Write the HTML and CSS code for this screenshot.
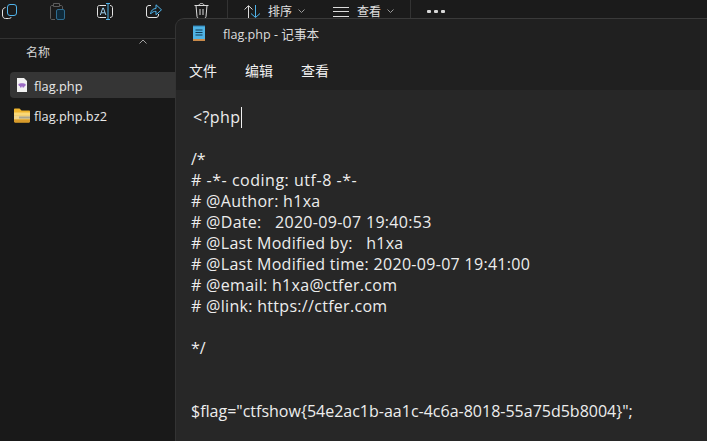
FILE: index.html
```html
<!DOCTYPE html>
<html lang="zh">
<head>
<meta charset="utf-8">
<title>flag.php - 记事本</title>
<link rel="stylesheet" href="styles.css">
</head>
<body>
<div class="explorer">
  <div class="toolbar">
    <svg class="tool t-copy" width="15" height="15" viewBox="0 0 15 15" fill="none"><rect x="5.500" y=".5" width="9" height="11" rx="2.500" stroke="#4fb3ea"/><path d="M3.500 3.500C1.500 4 .5 5 .5 7v4c0 2 1 3.500 3 3.500h3c1.500 0 2.500-.7 3-1.500" stroke="#e4e4e4"/></svg>
    <svg class="tool t-paste" width="15" height="17" viewBox="0 0 15 17" fill="none"><path d="M3 2.500H2C1 2.500.5 3 .5 4v11c0 1 .5 1.500 1.500 1.500h3" stroke="#5c5c5c"/><path d="M3.500.5h6v3h-6z M10 2.500h1c1 0 1.500.5 1.500 1.500v2" stroke="#5c5c5c"/><rect x="6.500" y="6.500" width="8" height="10" rx="1.500" fill="#0f2a3a" stroke="#2f6c90"/></svg>
    <svg class="tool t-rename" width="16" height="17" viewBox="0 0 16 17" fill="none"><path d="M9 2.500H2.500C1 2.500.5 3.500.5 4.500v8c0 1 .5 2 2 2H9M13 2.500c1.500 0 2.500 1 2.500 2v8c0 1-1 2-2.500 2" stroke="#e4e4e4"/><path d="M9 .5h4M9 16.500h4M11 .5v16" stroke="#4fb3ea"/><path d="M3.300 12 5.800 5h.6l2.500 7M4.200 9.800h3.800" stroke="#9fd0ee"/></svg>
    <svg class="tool t-share" width="16" height="14" viewBox="0 0 16 14" fill="none"><path d="M5 1.500H3C1.500 1.500.5 2.500.5 4v7c0 1.500 1 2.500 2.500 2.500h7c1.500 0 2.500-1 2.500-2.500v-1" stroke="#e4e4e4"/><path d="M4.500 10C5 6.500 7 4.500 10 4.500V.8L15.500 5.800 10 10.800V7.300C8 7.300 6 8 4.500 10z" stroke="#4fb3ea"/></svg>
    <svg class="tool t-trash" width="15" height="16" viewBox="0 0 15 16" fill="none"><path d="M.5 2.500h14M5 2.500c0-2.700 5-2.700 5 0M2 2.500l1 11c.1 1 1 2 2 2h5c1 0 1.900-1 2-2l1-11M6 6v6M9 6v6" stroke="#dcdcdc"/></svg>
    <span class="divider d-one"></span>
    <svg class="tool t-sort" width="16" height="13" viewBox="0 0 16 13" fill="none"><path d="M.5 4.500 4.500.7l4 3.800M4.500 1v12" stroke="#dcdcdc"/><path d="M7 8.500l4.500 4 4.500-4M11.500 0v12" stroke="#4fb3ea"/></svg>
    <span class="label l-sort">排序</span>
    <svg class="chev c-sort" width="7" height="4" viewBox="0 0 7 4" fill="none"><path d="M.5.500l3 3 3-3" stroke="#9a9a9a"/></svg>
    <svg class="tool t-view" width="16" height="10" viewBox="0 0 16 10" fill="none"><path d="M0 .5h16M0 4.500h16M0 9.500h16" stroke="#dcdcdc"/></svg>
    <span class="label l-view">查看</span>
    <svg class="chev c-view" width="7" height="4" viewBox="0 0 7 4" fill="none"><path d="M.5.500l3 3 3-3" stroke="#9a9a9a"/></svg>
    <span class="divider d-two"></span>
    <span class="dots"><i></i><i></i><i></i></span>
  </div>
  <div class="header">
    <span class="col-name">名称</span>
    <svg class="sort-up" width="8" height="5" viewBox="0 0 8 5" fill="none"><path d="M.5 4.500l3.500-3.500 3.500 3.500" stroke="#a0a0a0"/></svg>
  </div>
  <div class="file file-active">
    <svg width="10" height="14" viewBox="0 0 10 14"><path d="M0 0h7l3 3v11H0z" fill="#f2f2f2"/><path d="M1.500 6c1-1 6-1 7 0 .5 1 0 2-1 2.300L7 9.500H5.500V8.500h-1v1H3V8.300C2 8 1 7 1.500 6z" fill="#9b6bc4"/></svg>
    <span>flag.php</span>
  </div>
  <div class="file file-plain">
    <svg width="16" height="15" viewBox="0 0 16 15"><path d="M0 1.500C0 .8.500.5 1 .5h4.500L7.500 2.500H15c.6 0 1 .4 1 1V13c0 .8-.5 1.500-1.500 1.500h-13C.5 14.500 0 13.800 0 13z" fill="#efb52f"/><path d="M0 4.500h16v3H0z" fill="#f9d878"/><path d="M0 7.500h16v4H0z" fill="#efd48c"/><path d="M5 8.500h11v2H5z" fill="#a9a48c"/><path d="M0 11.500h16V13c0 .8-.5 1.500-1.500 1.500h-13C.5 14.500 0 13.800 0 13z" fill="#d99b2b"/></svg>
    <span>flag.php.bz2</span>
  </div>
</div>
<section class="notepad">
  <div class="title">
    <svg width="12" height="16" viewBox="0 0 12 16"><rect y="1" width="12" height="14" fill="#4fb3e4"/><path d="M0 14h12v2H0z" fill="#c98a4a"/><path d="M1 0v2M3 0v2M5 0v2M7 0v2M9 0v2M11 0v2" stroke="#2d7fb0"/><path d="M2.500 5h7M2.500 7.500h7M2.500 10h7" stroke="#103a55"/></svg>
    <span>flag.php - 记事本</span>
  </div>
  <nav class="menu"><span>文件</span><span>编辑</span><span>查看</span></nav>
  <div class="editor code">
    <div class="line first">&lt;?php<b class="caret"></b></div>
    <div class="line"></div>
    <div class="line">/*</div>
    <div class="line dash"># -*- coding: utf-8 -*-</div>
    <div class="line comment"># @Author: h1xa</div>
    <div class="line comment"># @Date:   2020-09-07 19:40:53</div>
    <div class="line comment"># @Last Modified by:   h1xa</div>
    <div class="line comment"># @Last Modified time: 2020-09-07 19:41:00</div>
    <div class="line comment"># @email: h1xa@ctfer.com</div>
    <div class="line comment"># @link: https://ctfer.com</div>
    <div class="line"></div>
    <div class="line">*/</div>
    <div class="line"></div>
    <div class="line"></div>
    <div class="line">$flag="ctfshow{54e2ac1b-aa1c-4c6a-8018-55a75d5b8004}";</div>
  </div>
</section>
</body>
</html>
```
FILE: styles.css
```css
* { box-sizing: border-box; }
html, body { margin: 0; height: 100%; }
body {
  position: relative;
  width: 707px;
  height: 441px;
  overflow: hidden;
  background: #191919;
  color: #ececec;
  font-family: "Open Sans", "Noto Sans CJK SC", sans-serif;
}
.explorer { height: 100%; }
.toolbar {
  position: relative;
  height: 39px;
  background: #1b1b1b;
  border-bottom: 1px solid #333;
}
.tool, .chev, .divider, .label, .dots { position: absolute; }
.t-copy { left: 2px; top: 4px; }
.t-paste { left: 50px; top: 3px; }
.t-rename { left: 97px; top: 3px; }
.t-share { left: 146px; top: 4px; }
.t-trash { left: 194px; top: 3px; }
.t-sort { left: 244px; top: 5px; }
.t-view { left: 333px; top: 7px; }
.l-sort, .l-view {
  top: 2px;
  font: 12px/17px "Noto Sans CJK SC", sans-serif;
  color: #e0e0e0;
}
.l-sort { left: 268px; }
.l-view { left: 357px; }
.c-sort { left: 298px; top: 9px; }
.c-view { left: 387px; top: 9px; }
.divider { top: 0; width: 1px; height: 18px; background: #333; }
.d-one { left: 227px; }
.d-two { left: 410px; }
.dots { left: 427px; top: 10px; display: flex; gap: 3px; }
.dots i { width: 4px; height: 3px; border-radius: 1px; background: #d8d8d8; }
.header { position: relative; height: 33px; padding: 4px 0 0 26px; }
.col-name { display: block; font: 12px/17px "Noto Sans CJK SC", sans-serif; color: #d4d4d4; }
.sort-up { position: absolute; left: 139px; top: 0; }
.file {
  display: flex;
  align-items: center;
  font-size: 12.800px;
  color: #e8e8e8;
}
.file span { margin-left: 7px; }
.file-active {
  height: 26px;
  margin-left: 10px;
  background: #353535;
  border-radius: 4px;
  padding-left: 7px;
}
.file-active span { padding-top: 1px; }
.file-plain { height: 27px; margin-top: 4px; margin-left: 14px; }
.file-plain span { margin-left: 4px; }
.notepad {
  position: absolute;
  left: 175px;
  top: 18px;
  width: 540px;
  height: 440px;
  background: #202020;
  border-radius: 9px 0 0 0;
  border-top: 1px solid #3a3a3a;
  border-left: 1px solid #333;
  display: flex;
  flex-direction: column;
}
.title {
  display: flex;
  align-items: center;
  height: 28px;
  padding: 0 0 0 17px;
  font-size: 12.600px;
  color: #dcdcdc;
}
.title span { margin-left: 18px; }
.menu {
  display: flex;
  gap: 28px;
  height: 43px;
  padding: 6px 0 0 13px;
  font: 14px/35px "Noto Sans CJK SC", sans-serif;
  color: #f0f0f0;
}
.editor { flex: 1; background: #272727; padding: 17px 0 0 15px; }
.code {
  font: 16px/21px "Open Sans", sans-serif;
  color: #ededed;
}
.line { height: 21px; white-space: pre; }
.comment { letter-spacing: .3px; }
.dash { letter-spacing: .52px; }
.first { padding-left: 2px; letter-spacing: .4px; }
.caret {
  display: inline-block;
  width: 1px;
  height: 21px;
  margin-left: 1px;
  vertical-align: -5px;
  background: #f0f0f0;
}
```
